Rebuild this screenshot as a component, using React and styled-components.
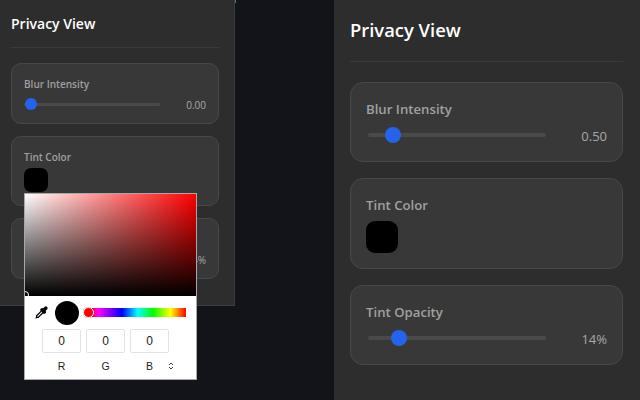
import React from "react";
import styled, { createGlobalStyle } from "styled-components";

const Global = createGlobalStyle`
  html, body { margin: 0; padding: 0; background: #121419; }
  body { font-family: "Open Sans", "Noto Sans", sans-serif; }
  #root { width: 640px; height: 400px; overflow: hidden; }
`;

const Stage = styled.div`
  display: flex;
  align-items: flex-start;
  justify-content: space-between;
  width: 640px;
  height: 400px;
  background: #121419;
`;

const Panel = styled.section`
  box-sizing: border-box;
  position: relative;
  background: #2d2d2d;
  width: ${p => (p.$big ? "306px" : "235px")};
  height: ${p => (p.$big ? "400px" : "306px")};
  padding: ${p => (p.$big ? "17px 17px 0 16px" : "13px 15px 0 11px")};
  border-right: ${p => (p.$big ? "0" : "1px solid #3c3c3c")};
  border-bottom: ${p => (p.$big ? "0" : "1px solid #3c3c3c")};
`;

const Speck = styled.span`
  position: absolute;
  left: 234px;
  top: 0;
  width: 2px;
  height: 3px;
  background: #3f7f8c;
`;

const Title = styled.h1`
  margin: 0;
  color: #fff;
  font-weight: 600;
  font-size: ${p => (p.$big ? "18.4px" : "14px")};
  line-height: ${p => (p.$big ? "26px" : "21px")};
  padding-bottom: ${p => (p.$big ? "18px" : "13px")};
  border-bottom: 1px solid #3a3a3a;
  margin-bottom: ${p => (p.$big ? "20px" : "15px")};
`;

const Card = styled.div`
  box-sizing: border-box;
  background: #383838;
  border: 1px solid #484848;
  border-radius: ${p => (p.$big ? "13px" : "10px")};
  height: ${p => p.$h}px;
  padding: ${p => (p.$big ? "15px 15px" : "12px 12px")};
  margin-bottom: ${p => (p.$big ? "16px" : "12px")};
`;

const Label = styled.div`
  color: #a0a0a0;
  font-weight: 600;
  font-size: ${p => (p.$big ? "13.2px" : "10px")};
  line-height: ${p => (p.$big ? "23px" : "16px")};
  margin-bottom: ${p => (p.$big ? "4px" : "3px")};
`;

const Row = styled.div`
  display: flex;
  align-items: center;
  justify-content: space-between;
  height: ${p => (p.$big ? "20px" : "18px")};
`;

const Track = styled.div`
  position: relative;
  margin-left: ${p => (p.$big ? "2px" : "0")};
  width: ${p => (p.$big ? "178px" : "136px")};
  height: ${p => (p.$big ? "4px" : "3px")};
  border-radius: 3px;
  background: #4a4a4a;
`;

const Thumb = styled.span`
  position: absolute;
  top: 50%;
  width: ${p => (p.$big ? "16px" : "12px")};
  height: ${p => (p.$big ? "16px" : "12px")};
  border-radius: 50%;
  background: #2563eb;
  transform: translate(-50%, -50%);
`;

const Value = styled.span`
  color: #a8a8a8;
  padding-top: 2px;
  font-size: ${p => (p.$big ? "13px" : "10px")};
`;

const Swatch = styled.div`
  background: #000;
  border-radius: ${p => (p.$big ? "9px" : "7px")};
  width: ${p => (p.$big ? "32px" : "24px")};
  height: ${p => (p.$big ? "32px" : "24px")};
`;

const Picker = styled.div`
  box-sizing: border-box;
  position: absolute;
  left: 24px;
  top: 193px;
  width: 173px;
  height: 187px;
  background: #fff;
  border: 1px solid #a8a8a8;
  font-family: "Liberation Sans", Arial, sans-serif;
  display: flex;
  flex-direction: column;
`;

const Saturation = styled.div`
  position: relative;
  overflow: hidden;
  height: 102px;
  background:
    linear-gradient(to top, #000, rgba(0, 0, 0, 0)),
    linear-gradient(to right, #fff, #f00);
`;

const SatHandle = styled.span`
  position: absolute;
  left: -4px;
  bottom: -3px;
  width: 6px;
  height: 6px;
  border: 1.5px solid #fff;
  border-radius: 50%;
  background: #000;
`;

const Controls = styled.div`
  display: flex;
  align-items: center;
  height: 33px;
  padding-left: 9px;
`;

const Dropper = styled.svg`
  width: 13px;
  height: 13px;
  flex: none;
  margin-left: 0.5px;
`;

const Preview = styled.div`
  width: 24px;
  height: 24px;
  flex: none;
  border-radius: 50%;
  background: #000;
  margin-left: 7.5px;
`;

const Hue = styled.div`
  position: relative;
  width: 97px;
  height: 9px;
  margin-left: 10px;
  background: linear-gradient(to right, #f00, #f0f 10%, #00f 34%, #0ff 50%, #0f0 66%, #ff0 84%, #f00);
`;

const HueThumb = styled.span`
  position: absolute;
  left: -6px;
  top: -1.5px;
  width: 9px;
  height: 9px;
  border-radius: 50%;
  background: #f00;
  border: 1.5px solid #fff;
  box-shadow: 0 0 1px rgba(0, 0, 0, 0.45);
`;

const Grid = styled.div`
  display: grid;
  grid-template-columns: repeat(3, 39px) 14px;
  column-gap: 5px;
  margin-left: 17px;
  align-items: center;
  justify-items: center;
`;

const Field = styled.div`
  box-sizing: border-box;
  width: 39px;
  height: 24px;
  border: 1.5px solid #e2e2e2;
  border-radius: 2px;
  display: flex;
  align-items: center;
  justify-content: center;
  font-size: 12px;
  color: #222;
`;

const Channel = styled.div`
  margin-top: 7px;
  font-size: 10.5px;
  line-height: 12px;
  color: #222;
`;

const Arrows = styled.svg`
  margin-top: 7px;
  width: 6px;
  height: 10px;
  justify-self: start;
  margin-left: -6px;
`;

const Slider = ({ big, pos }) => (
  <Track $big={big}>
    <Thumb $big={big} style={{ left: pos }} />
  </Track>
);

const Settings = ({ big, blur, blurPos, opacityPos, heights }) => (
  <Panel $big={big}>
    <Title $big={big}>Privacy View</Title>
    <Card $big={big} $h={heights[0]}>
      <Label $big={big}>Blur Intensity</Label>
      <Row $big={big}>
        <Slider big={big} pos={blurPos} />
        <Value $big={big}>{blur}</Value>
      </Row>
    </Card>
    <Card $big={big} $h={heights[1]}>
      <Label $big={big}>Tint Color</Label>
      <Swatch $big={big} />
    </Card>
    <Card $big={big} $h={heights[2]}>
      <Label $big={big}>Tint Opacity</Label>
      <Row $big={big}>
        <Slider big={big} pos={opacityPos} />
        <Value $big={big}>14%</Value>
      </Row>
    </Card>
  </Panel>
);

export default function App() {
  return (
    <Stage>
      <Global />
      <Speck />
      <Settings big={false} blur="0.00" blurPos="7px" opacityPos="19px" heights={[61, 70, 61]} />
      <Settings big blur="0.50" blurPos="25px" opacityPos="31px" heights={[80, 91, 80]} />
      <Picker>
        <Saturation>
          <SatHandle />
        </Saturation>
        <Controls>
          <Dropper viewBox="0 0 24 24" fill="none" stroke="#000" strokeWidth="2.4" strokeLinecap="round" strokeLinejoin="round">
            <path d="m2 22 1-1h3l9-9" />
            <path d="M3 21v-3l9-9" />
            <path d="m15 6 3.4-3.4a2.1 2.1 0 1 1 3 3L18 9l.4.4a2.1 2.1 0 1 1-3 3l-3.8-3.8a2.1 2.1 0 1 1 3-3l.4.4Z" fill="#000" />
          </Dropper>
          <Preview />
          <Hue>
            <HueThumb />
          </Hue>
        </Controls>
        <Grid>
          <Field>0</Field>
          <Field>0</Field>
          <Field>0</Field>
          <span />
          <Channel>R</Channel>
          <Channel>G</Channel>
          <Channel>B</Channel>
          <Arrows viewBox="0 0 6 10" fill="none" stroke="#444" strokeWidth="1">
            <path d="M1 4l2-2 2 2M1 6l2 2 2-2" />
          </Arrows>
        </Grid>
      </Picker>
    </Stage>
  );
}
